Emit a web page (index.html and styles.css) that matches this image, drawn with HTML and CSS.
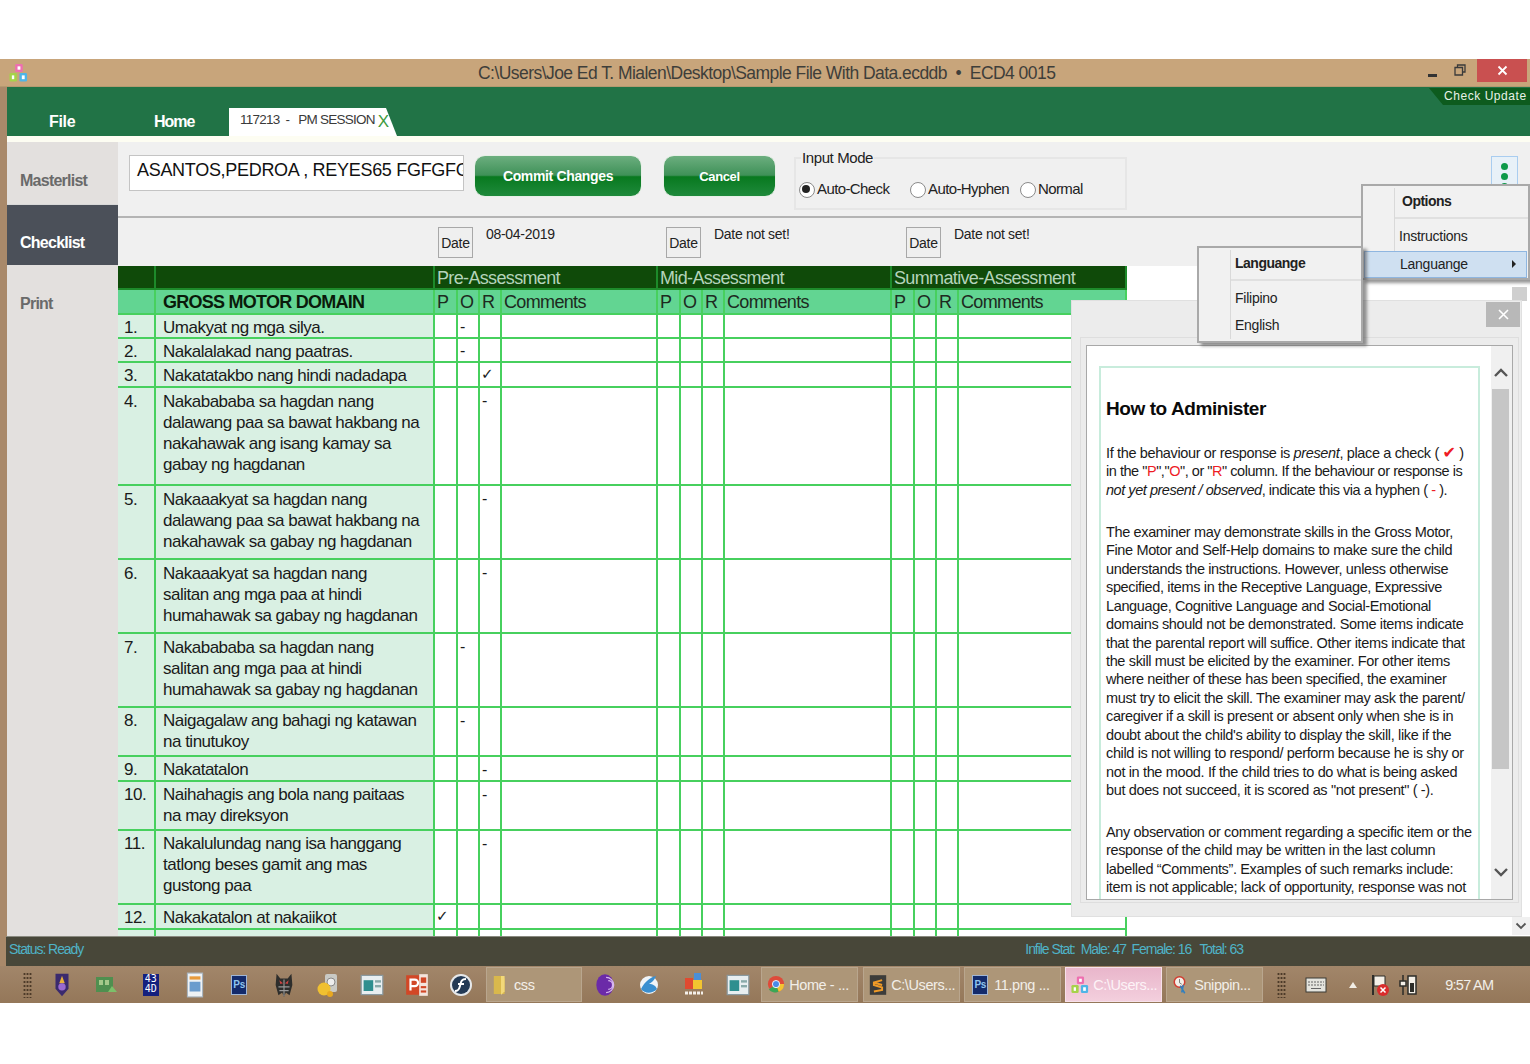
FILE: index.html
```html
<!DOCTYPE html>
<html lang="en">
<head>
<meta charset="utf-8">
<title>ECD Checklist</title>
<link rel="stylesheet" href="styles.css">
</head>
<body>
<svg class="defs" width="0" height="0" aria-hidden="true">
  <symbol id="ecd" viewBox="0 0 20 20">
    <rect x="6.5" y="0.5" width="8" height="8.5" rx="1.5" fill="#ee6fb0"/>
    <rect x="0.5" y="10" width="8" height="9" rx="1.5" fill="#a6d34a"/>
    <rect x="11" y="10" width="8" height="9" rx="1.5" fill="#4fb5e6"/>
    <rect x="9" y="3" width="3" height="3.5" fill="#fff"/>
    <rect x="3" y="12.5" width="2.5" height="4" fill="#fff"/>
    <rect x="13.5" y="12.5" width="3" height="4" fill="#fff"/>
  </symbol>
  <symbol id="win" viewBox="0 0 20 20">
    <rect x="1" y="2" width="18" height="16" fill="#e8eef0" stroke="#8a9aa0"/>
    <rect x="3" y="6" width="8" height="9" fill="#2f8f8f"/>
    <rect x="12.5" y="6" width="5" height="2" fill="#8aa"/>
    <rect x="12.5" y="10" width="5" height="2" fill="#8aa"/>
  </symbol>
</svg>
<div class="window">
  <header class="titlebar">
    <svg class="applogo"><use href="#ecd"/></svg>
    <div class="title">C:\Users\Joe Ed T. Mialen\Desktop\Sample File With Data.ecddb &nbsp;•&nbsp; ECD4 0015</div>
    <div class="wincontrols">
      <span class="wc-min"></span>
      <svg class="wc-restore" width="12" height="12" viewBox="0 0 12 12"><path d="M3.5 3V1H11V8H8.5M1 3.5H8.5V11H1Z" fill="none" stroke="#3a3a3a" stroke-width="1.3"/></svg>
      <span class="wc-close"><svg width="11" height="11" viewBox="0 0 11 11"><path d="M1.5 1.5L9.5 9.5M9.5 1.5L1.5 9.5" stroke="#fff" stroke-width="1.8"/></svg></span>
    </div>
  </header>
  <nav class="ribbon">
    <span class="nav nav-file">File</span>
    <span class="nav nav-home">Home</span>
    <span class="doctab">117213 &nbsp;- &nbsp; PM SESSION <b class="tabx">X</b></span>
    <span class="checkupdate">Check Update</span>
  </nav>
  <div class="cream"></div>
  <div class="main">
    <aside class="sidebar">
      <div class="side side-master">Masterlist</div>
      <div class="side side-check">Checklist</div>
      <div class="side side-print">Print</div>
    </aside>
    <section class="content">
      <div class="toolbar">
        <div class="namebox">ASANTOS,PEDROA , REYES65 FGFGFGFG</div>
        <button class="gbtn gbtn-commit">Commit Changes</button>
        <button class="gbtn gbtn-cancel">Cancel</button>
        <fieldset class="inputmode">
          <legend>Input Mode</legend>
          <span class="radio r1 on">Auto-Check</span>
          <span class="radio r2">Auto-Hyphen</span>
          <span class="radio r3">Normal</span>
        </fieldset>
      </div>
      <div class="dates">
        <div class="dategroup dg1"><button class="datebtn">Date</button><span>08-04-2019</span></div>
        <div class="dategroup dg2"><button class="datebtn">Date</button><span>Date not set!</span></div>
        <div class="dategroup dg3"><button class="datebtn">Date</button><span>Date not set!</span></div>
      </div>
      <div class="tablewrap">
        <table class="sheet">
          <colgroup>
            <col class="c-num"><col class="c-item">
            <col class="c-p"><col class="c-o"><col class="c-r"><col class="c-c1">
            <col class="c-p"><col class="c-o"><col class="c-r"><col class="c-c2">
            <col class="c-p"><col class="c-o"><col class="c-r"><col class="c-c3">
          </colgroup>
          <thead>
            <tr class="head1"><th></th><th></th><th colspan="4">Pre-Assessment</th><th colspan="4">Mid-Assessment</th><th colspan="4">Summative-Assessment</th></tr>
            <tr class="head2"><th></th><th class="domain">GROSS MOTOR DOMAIN</th><th>P</th><th>O</th><th>R</th><th>Comments</th><th>P</th><th>O</th><th>R</th><th>Comments</th><th>P</th><th>O</th><th>R</th><th>Comments</th></tr>
          </thead>
          <tbody>
            <tr class="h1"><td class="n">1.</td><td class="n">Umakyat ng mga silya.</td><td></td><td class="m">-</td><td></td><td></td><td></td><td></td><td></td><td></td><td></td><td></td><td></td><td></td></tr>
            <tr class="h1"><td class="n">2.</td><td class="n">Nakalalakad nang paatras.</td><td></td><td class="m">-</td><td></td><td></td><td></td><td></td><td></td><td></td><td></td><td></td><td></td><td></td></tr>
            <tr class="h1b"><td class="n">3.</td><td class="n">Nakatatakbo nang hindi nadadapa</td><td></td><td></td><td class="m chk">✓</td><td></td><td></td><td></td><td></td><td></td><td></td><td></td><td></td><td></td></tr>
            <tr class="h4 low"><td class="n">4.</td><td class="n">Nakabababa sa hagdan nang<br>dalawang paa sa bawat hakbang na<br>nakahawak ang isang kamay sa<br>gabay ng hagdanan</td><td></td><td></td><td class="m">-</td><td></td><td></td><td></td><td></td><td></td><td></td><td></td><td></td><td></td></tr>
            <tr class="h3 low"><td class="n">5.</td><td class="n">Nakaaakyat sa hagdan nang<br>dalawang paa sa bawat hakbang na<br>nakahawak sa gabay ng hagdanan</td><td></td><td></td><td class="m">-</td><td></td><td></td><td></td><td></td><td></td><td></td><td></td><td></td><td></td></tr>
            <tr class="h3 low"><td class="n">6.</td><td class="n">Nakaaakyat sa hagdan nang<br>salitan ang mga paa at hindi<br>humahawak sa gabay ng hagdanan</td><td></td><td></td><td class="m">-</td><td></td><td></td><td></td><td></td><td></td><td></td><td></td><td></td><td></td></tr>
            <tr class="h3 low"><td class="n">7.</td><td class="n">Nakabababa sa hagdan nang<br>salitan ang mga paa at hindi<br>humahawak sa gabay ng hagdanan</td><td></td><td class="m">-</td><td></td><td></td><td></td><td></td><td></td><td></td><td></td><td></td><td></td><td></td></tr>
            <tr class="h2"><td class="n">8.</td><td class="n">Naigagalaw ang bahagi ng katawan<br>na tinutukoy</td><td></td><td class="m">-</td><td></td><td></td><td></td><td></td><td></td><td></td><td></td><td></td><td></td><td></td></tr>
            <tr class="h1b"><td class="n">9.</td><td class="n">Nakatatalon</td><td></td><td></td><td class="m">-</td><td></td><td></td><td></td><td></td><td></td><td></td><td></td><td></td><td></td></tr>
            <tr class="h2"><td class="n">10.</td><td class="n">Naihahagis ang bola nang paitaas<br>na may direksyon</td><td></td><td></td><td class="m">-</td><td></td><td></td><td></td><td></td><td></td><td></td><td></td><td></td><td></td></tr>
            <tr class="h3"><td class="n">11.</td><td class="n">Nakalulundag nang isa hanggang<br>tatlong beses gamit ang mas<br>gustong paa</td><td></td><td></td><td class="m">-</td><td></td><td></td><td></td><td></td><td></td><td></td><td></td><td></td><td></td></tr>
            <tr class="h1b"><td class="n">12.</td><td class="n">Nakakatalon at nakaiikot</td><td class="m chk">✓</td><td></td><td></td><td></td><td></td><td></td><td></td><td></td><td></td><td></td><td></td><td></td></tr>
            <tr class="h1b"><td class="n">13.</td><td class="n">Nakakasalo ng bola gamit ang dalawang</td><td></td><td></td><td></td><td></td><td></td><td></td><td></td><td></td><td></td><td></td><td></td><td></td></tr>
          </tbody>
        </table>
      </div>
    </section>
  </div>
  <footer class="status">
    <span class="st-left">Status: Ready</span>
    <span class="st-right">Infile Stat: &nbsp;Male: 47 &nbsp;Female: 16 &nbsp; Total: 63</span>
  </footer>
  <div class="taskbar">
    <span class="grip grip-a"></span>
    <span class="ti"><svg viewBox="0 0 20 28"><path d="M3 2H17V18L10 26L3 18Z" fill="#3b2a6e"/><path d="M10 4L13 12H7Z" fill="#e8b23a"/><circle cx="10" cy="16" r="4" fill="#9a6ad0"/></svg></span>
    <span class="ti"><svg viewBox="0 0 24 22"><rect x="2" y="3" width="17" height="15" fill="#4f8f4f"/><rect x="5" y="6" width="4" height="5" fill="#a4c98a"/><rect x="11" y="6" width="4" height="5" fill="#a4c98a"/><path d="M14 18H23L18 12Z" fill="#7cc06a"/></svg></span>
    <span class="ti"><span class="blue43">43<br>4D</span></span>
    <span class="ti"><svg viewBox="0 0 20 24"><rect x="3" y="1" width="14" height="22" fill="#eef2f5" stroke="#a8b5c0"/><rect x="5" y="4" width="10" height="3" fill="#e79a3c"/><rect x="5" y="9" width="10" height="9" fill="#6b9ccd"/></svg></span>
    <span class="ti"><span class="psicon">Ps</span></span>
    <span class="ti"><svg viewBox="0 0 24 28"><path d="M4 2L8 7H16L20 2L21 14L18 25L14 22L12 27L10 22L6 25L3 14Z" fill="#2e2e2c"/><path d="M7 9L11 12L8 13ZM17 9L13 12L16 13Z" fill="#c44"/><path d="M6 16L18 16M7 20L17 20M12 8V26" stroke="#999" stroke-width="1.2"/></svg></span>
    <span class="ti"><svg viewBox="0 0 24 26"><rect x="9" y="2" width="12" height="18" rx="2" fill="#c9c9c4"/><circle cx="15" cy="10" r="4" fill="#eee" stroke="#888"/><circle cx="8" cy="17" r="6.5" fill="#f0c030"/><circle cx="14" cy="22" r="3" fill="#e8a820"/></svg></span>
    <span class="ti"><svg viewBox="0 0 20 20"><use href="#win"/></svg></span>
    <span class="ti"><svg viewBox="0 0 22 24"><rect x="1" y="3" width="14" height="18" fill="#d24726"/><rect x="13" y="2" width="8" height="20" fill="#f4e4dc"/><rect x="14.5" y="5" width="5" height="5" fill="#d24726"/><rect x="14.5" y="13" width="5" height="2" fill="#d24726"/><rect x="14.5" y="17" width="5" height="2" fill="#d24726"/><path d="M5 17V7H9A3 3 0 0 1 9 13H5" fill="none" stroke="#fff" stroke-width="2"/></svg></span>
    <span class="ti"><svg viewBox="0 0 24 24"><circle cx="12" cy="12" r="11" fill="#e6e8ea"/><circle cx="12" cy="12" r="9" fill="#243a55"/><path d="M17 6C12 6 12 9 11 13C10 17 9 18 6 18M9 11H15" fill="none" stroke="#fff" stroke-width="2"/></svg></span>
    <span class="tb tb-css"><svg class="ticon" viewBox="0 0 20 24"><path d="M2 2H11L14 5V22H2Z" fill="#d9b84c"/><path d="M10 2H14V19L10 23Z" fill="#f2d879"/></svg>css</span>
    <span class="ti ti-after"><svg viewBox="0 0 20 24"><ellipse cx="10" cy="12" rx="8" ry="10" fill="#6b2aa8"/><path d="M11 5A7 7 0 0 1 11 19M13 8A4 4 0 0 1 13 16" fill="none" stroke="#d8b8f0" stroke-width="1.2"/></svg></span>
    <span class="ti"><svg viewBox="0 0 24 24"><circle cx="12" cy="12" r="9" fill="#f0f4f8"/><path d="M4 16C8 8 14 4 19 3C17 8 14 10 12 11C16 11 19 13 20 16C15 21 8 21 4 16Z" fill="#3a8fd0"/></svg></span>
    <span class="ti"><svg viewBox="0 0 24 26"><rect x="12" y="1" width="7" height="14" fill="#4a8fd8"/><rect x="3" y="6" width="8" height="11" fill="#e04a30"/><rect x="11" y="8" width="9" height="9" fill="#f2c530"/><path d="M3 21H21" stroke="#f4f0ea" stroke-width="3" stroke-dasharray="3 1"/></svg></span>
    <span class="ti"><svg viewBox="0 0 20 20"><use href="#win"/></svg></span>
    <span class="tb tb-first"><svg class="ticon" viewBox="1 2 20 22"><circle cx="11" cy="12" r="9" fill="#de4b3a"/><path d="M11 12L3 18A9 9 0 0 0 14 20.5Z" fill="#3ba756"/><path d="M11 12L20 12A9 9 0 0 1 14 20.5Z" fill="#f4c430"/><circle cx="11" cy="12" r="4" fill="#4a8ae8" stroke="#fff"/></svg>Home - ...</span>
    <span class="tb"><svg class="ticon" viewBox="0 0 22 26"><rect x="1" y="1" width="20" height="24" fill="#3c3c3a"/><path d="M16 7L6 10V13L16 16V19L6 21M6 10L16 13" fill="none" stroke="#ef9a27" stroke-width="2.4"/></svg>C:\Users...</span>
    <span class="tb"><span class="psicon psicon-sm">Ps</span>11.png ...</span>
    <span class="tb tb-active"><svg class="ticon"><use href="#ecd"/></svg>C:\Users...</span>
    <span class="tb"><svg class="ticon" viewBox="0 0 24 26"><circle cx="10" cy="9" r="7" fill="#f2efe8" stroke="#d23c30" stroke-width="2"/><path d="M10 5V10L13 12" stroke="#555" fill="none"/><path d="M11 14L17 24M15 13L13 23" stroke="#2f7fc0" stroke-width="2"/></svg>Snippin...</span>
    <span class="grip grip-b"></span>
    <span class="tray tray-kb"><svg viewBox="0 0 22 18" width="22" height="18"><rect x="1" y="2" width="20" height="14" fill="#e4e4de" stroke="#3a3a34"/><path d="M3 6H19M3 9H19" stroke="#666" stroke-dasharray="2 1"/><path d="M6 12.5H16" stroke="#666"/></svg></span>
    <span class="tray tray-up"></span>
    <span class="tray tray-flag"><svg viewBox="0 0 20 24" width="20" height="24"><path d="M3 2V22" stroke="#2c2c28" stroke-width="2"/><path d="M4 3H15V13H4Z" fill="#f4f0e8" stroke="#2c2c28"/><circle cx="13" cy="17" r="6" fill="#d92c2c"/><path d="M10.5 14.5L15.5 19.5M15.5 14.5L10.5 19.5" stroke="#fff" stroke-width="1.5"/></svg></span>
    <span class="tray tray-pw"><svg viewBox="0 0 20 24" width="20" height="24"><rect x="10" y="3" width="8" height="18" fill="#f4f0e8" stroke="#2c2c28" stroke-width="1.5"/><rect x="12" y="10" width="4" height="9" fill="#2c2c28"/><path d="M5 2V8M2 8H8V13H2ZM5 13V22" fill="#f4f0e8" stroke="#2c2c28" stroke-width="1.5"/></svg></span>
    <span class="clock">9:57 AM</span>
  </div>

  <div class="menu menu-options">
    <div class="menu-gutter"></div>
    <div class="menu-head">Options</div>
    <div class="menu-item">Instructions</div>
    <div class="menu-item menu-sel">Languange<span class="menu-arrow"></span></div>
  </div>
  <div class="threedots"><i></i><i></i><i></i></div>
  <div class="scrollthumb-top"></div>
  <div class="outer-scroll-down"><svg width="12" height="8" viewBox="0 0 12 8"><path d="M1.5 1.5L6 6L10.5 1.5" fill="none" stroke="#555" stroke-width="1.8"/></svg></div>

  <section class="instructions">
    <div class="instr-close"><svg width="11" height="11" viewBox="0 0 11 11"><path d="M1 1L10 10M10 1L1 10" stroke="#fff" stroke-width="1.6"/></svg></div>
    <div class="instr-group">
      <div class="instr-box">
        <div class="instr-card">
          <h2>How to Administer</h2>
          <p>If the behaviour or response is <em>present</em>, place a check ( <b class="red tick">✔</b> )<br><span class="tight">in the "<span class="red">P</span>","<span class="red">O</span>", or "<span class="red">R</span>" column. If the behaviour or response is</span><br><span class="tight"><em>not yet present / observed</em>, indicate this via a hyphen ( <span class="red">-</span> ).</span></p>
          <p>The examiner may demonstrate skills in the Gross Motor,<br>Fine Motor and Self-Help domains to make sure the child<br>understands the instructions. However, unless otherwise<br>specified, items in the Receptive Language, Expressive<br>Language, Cognitive Language and Social-Emotional<br>domains should not be demonstrated. Some items indicate<br>that the parental report will suffice. Other items indicate that<br>the skill must be elicited by the examiner. For other items<br>where neither of these has been specified, the examiner<br>must try to elicit the skill. The examiner may ask the parent/<br>caregiver if a skill is present or absent only when she is in<br>doubt about the child's ability to display the skill, like if the<br>child is not willing to respond/ perform because he is shy or<br>not in the mood. If the child tries to do what is being asked<br>but does not succeed, it is scored as "not present" ( -).</p>
          <p>Any observation or comment regarding a specific item or the<br>response of the child may be written in the last column<br>labelled “Comments”. Examples of such remarks include:<br>item is not applicable; lack of opportunity, response was not</p>
        </div>
        <div class="instr-scroll">
          <svg class="sc-up" width="16" height="10" viewBox="0 0 16 10"><path d="M2 8L8 2L14 8" fill="none" stroke="#555" stroke-width="2.4"/></svg>
          <div class="sc-thumb"></div>
          <svg class="sc-down" width="16" height="10" viewBox="0 0 16 10"><path d="M2 2L8 8L14 2" fill="none" stroke="#555" stroke-width="2.4"/></svg>
        </div>
      </div>
    </div>
  </section>

  <div class="menu menu-lang">
    <div class="menu-gutter"></div>
    <div class="menu-head">Languange</div>
    <div class="menu-item">Filipino</div>
    <div class="menu-item">English</div>
  </div>
</div>
</body>
</html>
```
FILE: styles.css
```css
* { box-sizing: border-box; }
html, body { margin: 0; padding: 0; background: #fff; }
body { width: 1530px; height: 1064px; overflow: hidden; font-family: "Liberation Sans", Arial, sans-serif; color: #1c1c1c; }
.defs { position: absolute; }
.window { position: relative; margin-top: 59px; width: 1530px; height: 944px; display: flex; flex-direction: column; overflow: hidden; background: #a9896a; }

/* title bar */
.titlebar { height: 28px; background: #c8a57b; display: flex; align-items: center; position: relative; flex: none; border-bottom: 1px solid #b49a70; }
.applogo { width: 19px; height: 20px; margin-left: 9px; flex: none; }
.title { position: absolute; left: 478px; top: 4px; font-size: 17.5px; line-height: 21px; color: #3e3e3a; white-space: nowrap; letter-spacing: -0.55px; }
.wincontrols { margin-left: auto; display: flex; align-items: center; height: 100%; }
.wc-min { width: 9px; height: 2.5px; background: #333; margin-right: 17px; margin-top: 6px; }
.wc-restore { margin-right: 11px; margin-top: -5px; }
.wc-close { width: 50px; height: 23px; background: #c95050; margin-right: 3px; margin-top: -5px; display: flex; align-items: center; justify-content: center; }

/* ribbon */
.ribbon { height: 49px; background: #217346; position: relative; flex: none; margin-left: 7px; display: flex; align-items: flex-end; }
.nav { color: #fff; font-weight: 700; font-size: 16px; line-height: 20px; padding-bottom: 4px; letter-spacing: -0.3px; }
.nav-file { margin-left: 42px; width: 105px; }
.nav-home { width: 75px; letter-spacing: -1px; }
.doctab { height: 28px; width: 168px; background: #fff; padding: 1px 0 0 11px; font-size: 13.5px; line-height: 20px; color: #3a3a3a; letter-spacing: -0.75px; white-space: nowrap; clip-path: polygon(0 0, 157px 0, 100% 100%, 0 100%); }
.tabx { font-weight: 400; color: #3f9b3f; font-size: 17px; position: relative; top: 3px; }
.checkupdate { position: absolute; right: 0; top: 1px; width: 101px; height: 17px; padding-left: 15px; background: #0d5b1e; color: #e8f2e8; font-size: 12px; line-height: 17px; letter-spacing: 0.55px; white-space: nowrap; clip-path: polygon(0 0, 100% 0, 100% 100%, 14px 100%); }
.cream { height: 6px; background: #fdfdf2; flex: none; margin-left: 7px; }

/* body */
.main { flex: 1; display: flex; min-height: 0; margin-left: 7px; }
.sidebar { width: 111px; flex: none; display: flex; flex-direction: column; background: #e3e0de; }
.side { padding-left: 13px; font-weight: 700; font-size: 16px; letter-spacing: -0.75px; color: #6a6a6a; }
.side-master { height: 62px; padding-top: 30px; }
.side-check { height: 61px; padding-top: 29px; background: #4b5059; color: #fff; border-top: 1px solid #d8d8d8; }
.side-print { flex: 1; padding-top: 30px; }

.content { flex: 1; display: flex; flex-direction: column; background: #f0f0f0; min-width: 0; position: relative; }
.toolbar { height: 76px; flex: none; display: flex; align-items: flex-start; padding: 13px 0 0 11px; border-bottom: 2px solid #b4b4b4; }
.namebox { width: 335px; height: 36px; background: #fff; border: 1px solid #c4c4c4; overflow: hidden; padding: 3px 0 0 7px; font-size: 18px; line-height: 22px; white-space: nowrap; letter-spacing: -0.3px; color: #111; }
.gbtn { height: 42px; border: 1px solid #e7f0e7; border-radius: 11px; color: #fff; font: 700 14px "Liberation Sans", Arial, sans-serif; letter-spacing: -0.35px; background: linear-gradient(#6cae7f 0%, #3f9158 48%, #08791f 52%, #1f8a3c 100%); padding: 0; }
.gbtn-commit { width: 168px; margin-left: 10px; }
.gbtn-cancel { width: 113px; margin-left: 21px; font-size: 13px; }
.inputmode { position: relative; width: 333px; height: 60px; margin: -5px 0 0 18px; padding: 0; border: 2px solid #e6e6e6; font-size: 15px; letter-spacing: -0.6px; color: #222; }
.inputmode legend { margin-left: 5px; padding: 0 1px; font-size: 15px; line-height: 16px; letter-spacing: -0.4px; }
.radio { position: absolute; top: 14px; line-height: 18px; padding-left: 18px; white-space: nowrap; }
.radio::before { content: ""; position: absolute; left: 0; top: 2px; width: 14px; height: 14px; border: 1px solid #8a8a8a; border-radius: 50%; background: #fff; }
.radio.on::after { content: ""; position: absolute; left: 3px; top: 5px; width: 8px; height: 8px; border-radius: 50%; background: #222; }
.r1 { left: 3px; }
.r2 { left: 114px; }
.r3 { left: 224px; }

.dates { height: 48px; flex: none; position: relative; display: flex; padding-left: 320px; font-size: 14px; letter-spacing: -0.3px; color: #222; }
.dategroup { display: flex; align-items: flex-start; flex: none; }
.dg1 { width: 228px; }
.dg2 { width: 240px; }
.datebtn { width: 35px; height: 31px; margin-top: 9px; border: 1px solid #a8a8a8; background: #efefef; font: 14px "Liberation Sans", Arial, sans-serif; letter-spacing: -0.3px; color: #222; padding: 0; }
.dategroup span { margin: 6px 0 0 13px; line-height: 20px; }

.tablewrap { flex: 1; min-height: 0; overflow: hidden; background: #fff; }
.sheet { border-collapse: collapse; table-layout: fixed; width: 1008px; font-size: 17px; line-height: 21px; letter-spacing: -0.5px; color: #1a1a1a; }
.c-num { width: 37px; } .c-item { width: 279px; }
.c-p { width: 23px; } .c-o { width: 22px; } .c-r { width: 22px; }
.c-c1 { width: 156px; } .c-c2 { width: 167px; } .c-c3 { width: 168px; }
.sheet th, .sheet td { border: 2px solid #47d05e; padding: 0 0 0 7px; vertical-align: top; font-weight: 400; text-align: left; overflow: hidden; white-space: nowrap; }
.sheet tr > :first-child { border-left: 0; }
.head1 th { height: 23px; background: #0f4a09; color: #b5d4bb; border-top: 0; padding: 3px 0 0 2px; border-color: #1d8a2a; line-height: 19px; font-size: 18px; letter-spacing: -0.65px; }
.head2 th { height: 25px; background: #62d592; color: #1d2a20; padding: 2px 0 0 2px; line-height: 20px; font-size: 18px; letter-spacing: -0.65px; }
.head2 th.domain { font-weight: 700; color: #0a1a0a; padding-left: 7px; letter-spacing: -0.75px; }
.sheet td.n { background: #d9f0e3; padding-top: 2px; }
.sheet .h1 td.n { padding-top: 3px; line-height: 19px; }
.sheet .low td.n { padding-top: 3px; }
.sheet td:first-child { padding-left: 6px; }
.sheet td.m { padding: 3px 0 0 2px; font-size: 16px; line-height: 20px; }
.sheet .h1 td.m { padding-top: 2px; }
.sheet td.chk { font-family: "DejaVu Sans", sans-serif; font-size: 15px; padding: 1px 0 0 1px; }
.h1 td { height: 24px; }
.h1b td { height: 25px; }
.h2 td { height: 49px; }
.h3 td { height: 74px; }
.h4 td { height: 98px; }

/* status + taskbar */
.status { height: 30px; flex: none; background: #484739; margin-left: 6px; position: relative; display: flex; align-items: center; padding-bottom: 5px; font-size: 14px; color: #4fb3c7; letter-spacing: -1.05px; border-top: 1px solid #8a8a80; }
.st-left { margin-left: 3px; }
.st-right { margin-left: 942px; white-space: nowrap; }
.taskbar { height: 37px; flex: none; background: linear-gradient(#a2866a, #947759); display: flex; align-items: center; padding-left: 23px; }
.grip { width: 9px; height: 26px; flex: none; background: radial-gradient(circle, #4c3a28 1px, transparent 1.2px) 0 0 / 3px 4px; }
.grip-a { margin-right: 8px; }
.grip-b { margin: 0 0 0 10px; }
.ti { width: 44.3px; height: 32px; flex: none; display: flex; align-items: center; justify-content: center; }
.ti > svg { width: 24px; height: 26px; }
.ti-after { margin-left: 1px; }
.blue43 { width: 16px; height: 22px; background: #14207e; color: #fff; font: 10px/10.5px "DejaVu Sans Mono", monospace; display: block; text-align: center; letter-spacing: 0; }
.psicon { width: 16px; height: 20px; background: #132a6b; border: 1px solid #9fb5d5; color: #8fc4ee; font: 700 10px/18px "Liberation Sans", sans-serif; text-align: center; display: block; flex: none; }
.psicon-sm { margin-right: 6px; margin-left: 2px; }
.tb { width: 97px; height: 35px; flex: none; margin-right: 4px; border: 1px solid #b9a68e; background: #ad9678; color: #f2eee8; font-size: 14.5px; letter-spacing: -0.4px; display: flex; align-items: center; padding-left: 5px; white-space: nowrap; overflow: hidden; }
.ticon { width: 18px; height: 24px; margin-right: 4px; flex: none; }
.tb-css { margin: 0 0 0 3px; width: 96px; color: #f4f0ea; }
.tb-first { margin-left: 1px; margin-right: 5px; }
.tb-active { background: linear-gradient(#e9b6cb, #f3cfdd); border-color: #f7e1ea; color: #fdf3f7; }
.tray { display: flex; align-items: center; justify-content: center; flex: none; }
.tray-kb { width: 24px; margin-left: 18px; }
.tray-up { width: 0; height: 0; margin-left: 21px; border-left: 4px solid transparent; border-right: 4px solid transparent; border-bottom: 6px solid #f2eee6; }
.tray-flag { margin-left: 13px; width: 20px; }
.tray-pw { margin-left: 8px; width: 20px; }
.clock { margin-left: 27px; color: #f2eee8; font-size: 14.5px; letter-spacing: -0.7px; white-space: nowrap; }

/* menus */
.menu { position: absolute; background: #f1f1f1; border: 2px solid #a9a9a9; box-shadow: 4px 3px 3px rgba(80,80,80,.6); font-size: 14px; letter-spacing: -0.25px; color: #222; }
.menu-gutter { position: absolute; top: 2px; bottom: 2px; left: 31px; border-left: 1px solid #d9d9d9; }
.menu-options { left: 1361px; top: 125px; width: 169px; height: 96px; z-index: 5; }
.menu-options .menu-gutter { height: 66px; bottom: auto; }
.menu-lang { left: 1197px; top: 187px; width: 166px; height: 97px; z-index: 6; }
.menu-head { font-weight: 700; height: 33px; margin-left: 32px; padding: 5px 0 0 4px; border-bottom: 2px solid #e0e0e0; line-height: 20px; letter-spacing: -0.5px; }
.menu-options .menu-head { padding-left: 7px; }
.menu-item { height: 27px; line-height: 27px; padding-left: 36px; position: relative; }
.menu-lang .menu-head + .menu-item { margin-top: 4px; }
.menu-options .menu-head + .menu-item { margin-top: 4px; height: 28px; }
.menu-options .menu-item.menu-sel { margin: 0 1px; padding-left: 35px; background: #cfe0f1; border: 1px solid #8fb6e0; line-height: 25px; height: 27px; }
.menu-arrow { position: absolute; right: 10px; top: 8px; border-left: 4px solid #222; border-top: 4px solid transparent; border-bottom: 4px solid transparent; }
.threedots { position: absolute; left: 1491px; top: 97px; width: 27px; height: 29px; background: #e8f1f8; border: 1px solid #a9cdf0; display: flex; flex-direction: column; align-items: center; gap: 3px; padding-top: 6px; overflow: hidden; }
.threedots i { width: 7px; height: 7px; border-radius: 50%; background: #0e9a4a; flex: none; }
.scrollthumb-top { position: absolute; left: 1512px; top: 228px; width: 15px; height: 14px; background: #cfcfcf; }
.outer-scroll-down { position: absolute; left: 1512px; top: 858px; width: 18px; height: 18px; background: #f0f0f0; display: flex; align-items: center; justify-content: center; }

/* instructions panel */
.instructions { position: absolute; left: 1071px; top: 241px; width: 451px; height: 617px; background: #ececec; border: 1px solid #e0e0e0; padding: 36px 2px 0 8px; }
.instr-close { position: absolute; left: 414px; top: 1px; width: 34px; height: 25px; background: #b8b8b8; display: flex; align-items: center; justify-content: center; }
.instr-group { border: 1px solid #dedede; padding: 7px 5px 0; height: 566px; }
.instr-box { height: 555px; background: #fff; border: 1px solid #a8a8a8; position: relative; overflow: hidden; display: flex; }
.instr-card { width: 381px; margin: 20px 0 0 12px; border: 2px solid #c8ecdc; border-bottom: 0; padding: 0 0 0 5px; font-size: 14.5px; line-height: 18.46px; color: #1a1a1a; letter-spacing: -0.36px; white-space: nowrap; flex: none; height: 540px; }
.instr-card h2 { margin: 29px 0 0; font-size: 19px; line-height: 24px; letter-spacing: -0.42px; color: #0a0a0a; font-weight: 700; }
.instr-card p { margin: 23px 0 0; }
.instr-card p:nth-of-type(2) { margin-top: 23.5px; }
.tight { letter-spacing: -0.46px; }
.red { color: #ee1c25; }
.tick { font-family: "DejaVu Sans", sans-serif; font-size: 16px; line-height: 14px; font-weight: 700; }
.instr-scroll { position: absolute; right: 0; top: 0; width: 21px; height: 100%; background: #f0f0f0; }
.sc-up { position: absolute; left: 2px; top: 22px; }
.sc-down { position: absolute; left: 2px; top: 521px; }
.sc-thumb { position: absolute; left: 1px; top: 43px; width: 17px; height: 380px; background: #c6c6c6; }
```
